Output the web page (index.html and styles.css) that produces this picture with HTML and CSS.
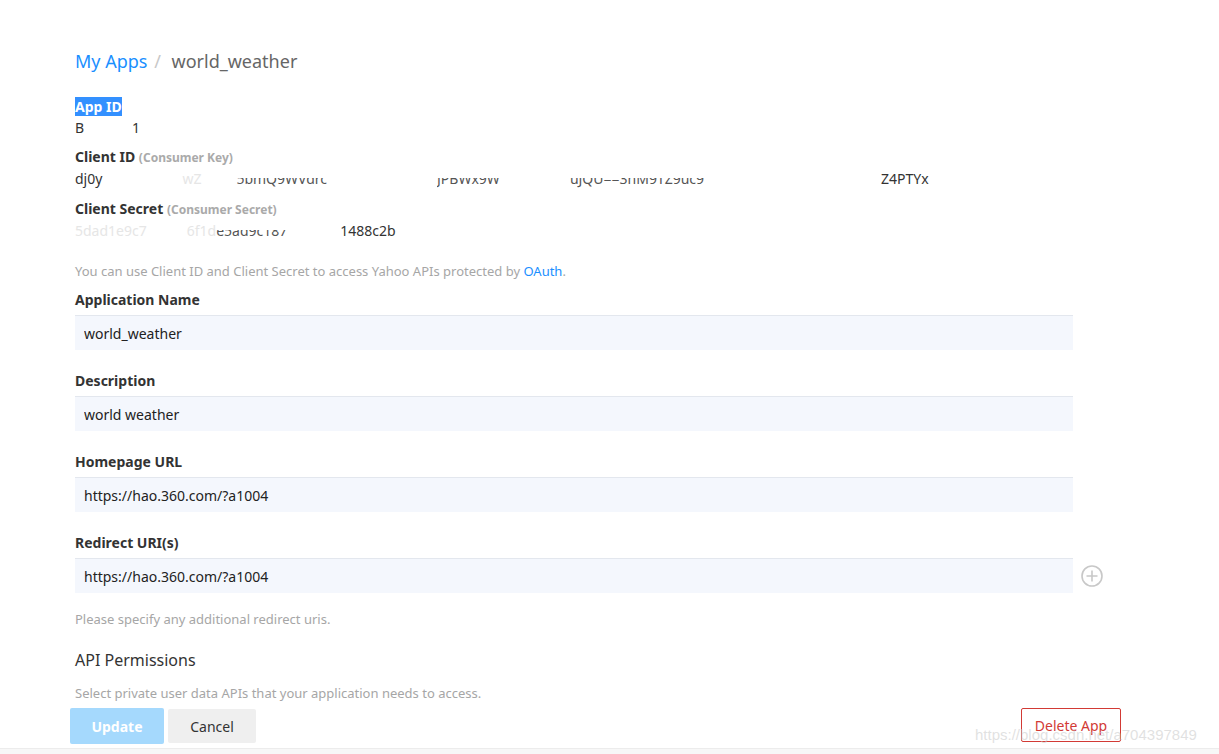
FILE: index.html
```html
<!DOCTYPE html>
<html lang="en">
<head>
  <meta charset="UTF-8" />
  <title>My Apps / world_weather</title>
  <link rel="stylesheet" href="styles.css">
</head>
<body>
  <div class="page">
    <div class="crumbs">
      <a class="crumb-link" href="#">My Apps</a>
      <span class="crumb-sep">/</span>
      <span class="crumb-current">world_weather</span>
    </div>

    <div class="key-block">
      <div class="key-label"><span class="selected">App ID</span></div>
      <div class="key-value">B<span class="gap" style="width:48px"></span>1</div>

      <div class="key-label key-next">Client ID <span class="key-sub">(Consumer Key)</span></div>
      <div class="key-value">dj0y<span class="gap" style="width:80px"></span><span class="faint">wZ</span><span class="gap" style="width:35px"></span><span class="cut">5bmQ9WVdrc</span><span class="gap" style="width:110px"></span><span class="cut">JPBWx9W</span><span class="gap" style="width:70px"></span><span class="cut">uJQU==3hM9TZ9uc9</span><span class="gap" style="width:177px"></span>Z4PTYx</div>

      <div class="key-label key-next2">Client Secret <span class="key-sub">(Consumer Secret)</span></div>
      <div class="key-value"><span class="faint">5dad1e9c7</span><span class="gap" style="width:40px"></span><span class="faint">6f1d</span><span class="cut">e5ad9c187</span><span class="gap" style="width:53px"></span>1488c2b</div>
    </div>

    <p class="note note-oauth">You can use Client ID and Client Secret to access Yahoo APIs protected by <a href="#">OAuth</a>.</p>

    <div class="field">
      <label class="field-label">Application Name</label>
      <div class="field-row"><input class="field-input" type="text" value="world_weather"></div>
    </div>
    <div class="field">
      <label class="field-label">Description</label>
      <div class="field-row"><input class="field-input" type="text" value="world weather"></div>
    </div>
    <div class="field">
      <label class="field-label">Homepage URL</label>
      <div class="field-row"><input class="field-input" type="text" value="https://hao.360.com/?a1004"></div>
    </div>
    <div class="field field-last">
      <label class="field-label">Redirect URI(s)</label>
      <div class="field-row">
        <input class="field-input" type="text" value="https://hao.360.com/?a1004">
        <svg class="add-icon" width="24" height="24" viewBox="0 0 24 24">
          <circle cx="12" cy="12" r="10" fill="none" stroke="#c8c8c8" stroke-width="1.6"/>
          <path d="M12 6.5v11M6.5 12h11" stroke="#c8c8c8" stroke-width="1.6"/>
        </svg>
      </div>
    </div>

    <p class="note note-redirect">Please specify any additional redirect uris.</p>

    <h3 class="section-title">API Permissions</h3>
    <p class="note note-perm">Select private user data APIs that your application needs to access.</p>

    <div class="actions">
      <div class="actions-left">
        <button class="btn btn-update">Update</button>
        <button class="btn btn-cancel">Cancel</button>
      </div>
      <button class="btn btn-delete">Delete App</button>
    </div>
  </div>
  <div class="footer-strip"></div>
  <div class="watermark">https://blog.csdn.net/a704397849</div>
</body>
</html>
```

FILE: styles.css
```css
html, body { margin: 0; padding: 0; background: #fff; }
body {
  font-family: "Noto Sans", "Open Sans", "Noto Sans CJK SC", sans-serif;
  color: #333;
  height: 754px;
  overflow: hidden;
  position: relative;
}
.page { padding: 47px 0 0 75px; width: 1046px; }

/* breadcrumb */
.crumbs { font-size: 18px; line-height: 28px; height: 28px; }
.crumb-link { color: #1a8fff; text-decoration: none; }
.crumb-sep { color: #c8c8c8; margin: 0 6px 0 2px; }
.crumb-current { color: #666; }

/* keys */
.key-block { margin-top: 22px; }
.key-label { font-size: 14px; font-weight: bold; line-height: 20px; color: #333; }
.key-next { margin-top: 8px; }
.key-next2 { margin-top: 9px; }
.key-sub { font-size: 12px; color: #aaa; }
.selected { background: #3390ff; color: #fff; }
.key-value { font-size: 14px; line-height: 22px; color: #333; white-space: nowrap; }
.gap { display: inline-block; }
.faint { color: #e6e6e6; }
.cut { color: #555; clip-path: inset(45% 0 0 0); display: inline-block; }

/* notes */
.note { margin: 0; font-size: 13px; line-height: 20px; color: #a6a6a6; }
.note a { color: #1a8fff; text-decoration: none; }
.note-oauth { margin-top: 19px; margin-bottom: 9px; }
.note-redirect { margin-top: 16px; }
.note-perm { margin-top: 11px; }

/* form fields */
.field { margin-bottom: 21px; }
.field-last { margin-bottom: 0; }
.field-label { display: block; font-size: 14px; font-weight: bold; line-height: 20px; margin-bottom: 5px; color: #333; }
.field-row { display: flex; align-items: center; }
.field-input {
  width: 998px;
  height: 35px;
  box-sizing: border-box;
  border: none;
  border-top: 1px solid #e3e7ee;
  background: #f4f7fd;
  padding: 0 9px;
  font-family: inherit;
  font-size: 14px;
  color: #222;
  outline: none;
}
.add-icon { margin-left: 7px; }

.section-title { margin: 19px 0 0; font-size: 16px; font-weight: normal; line-height: 24px; color: #333; }

/* buttons */
.actions { display: flex; justify-content: space-between; align-items: flex-start; margin-top: 5px; margin-left: -5px; }
.actions-left { display: flex; gap: 4px; align-items: center; }
.btn { font-family: inherit; font-size: 14px; cursor: pointer; border-radius: 2px; }
.btn-update { width: 94px; height: 36px; border: none; background: #a5d9fd; color: #fff; font-weight: bold; }
.btn-cancel { width: 88px; height: 34px; border: none; background: #efefef; color: #333; }
.btn-delete { width: 100px; height: 34px; border: 1px solid #d23a35; background: #fff; color: #d23a35; }

.footer-strip { position: absolute; left: 0; right: 0; bottom: 0; height: 5px; border-top: 1px solid #ececec; background: #f7f7f7; }
.watermark {
  position: absolute;
  left: 975px;
  top: 726px;
  font-family: "Liberation Sans", sans-serif;
  font-size: 15px;
  color: rgba(200, 200, 200, 0.55);
  pointer-events: none;
}
```
